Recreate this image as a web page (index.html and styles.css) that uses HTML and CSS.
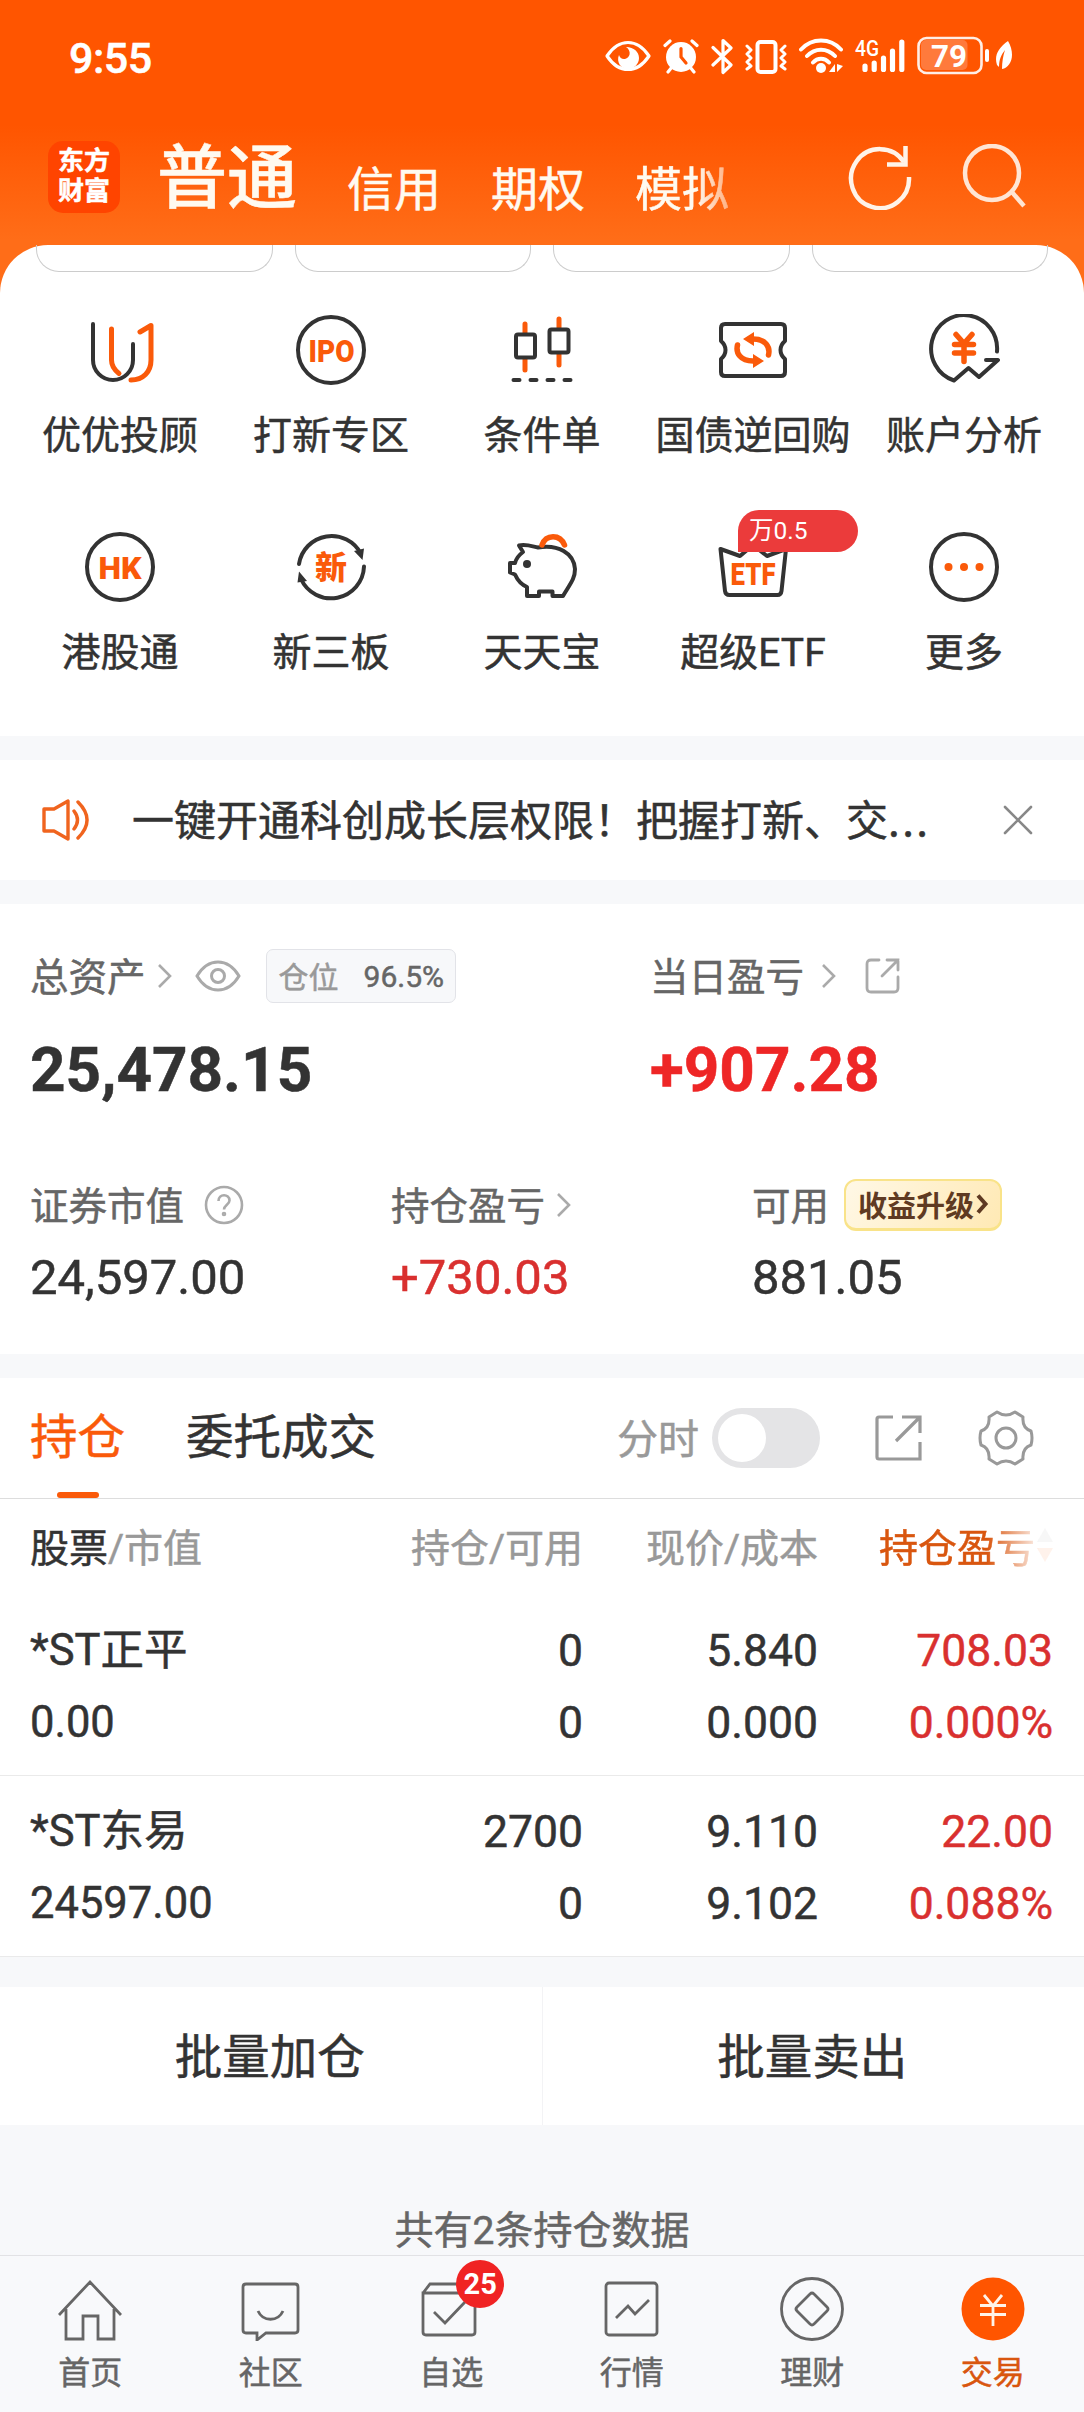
FILE: index.html
```
<!DOCTYPE html>
<html lang="zh-Hans">
<head>
  <meta charset="UTF-8" />
  <title>交易</title>
  <link rel="stylesheet" href="styles.css">
</head>
<body>

  <header class="header">
    <!-- 状态栏 -->
    <div class="status-bar">
      <span class="status-time">9:55</span>
      <div class="status-icons">
        <svg width="46" height="40" viewBox="0 0 46 40" fill="none" stroke="#fff" stroke-width="3.2">
          <path d="M2 20C8 11 15 6.500 23 6.500S38 11 44 20C38 29 31 33.500 23 33.500S8 29 2 20Z" stroke-linejoin="round" />
          <path d="M21 11c6 4 4 11-1 12-3 .5-5-1-6-4-3 7 2 14 9 14 6 0 11-5 11-11S29 11 21 11Z" fill="#fff" stroke="none" />
        </svg>
        <svg width="36" height="40" viewBox="0 0 36 40" fill="none" stroke="#fff" stroke-width="3.200" stroke-linecap="round">
          <circle cx="18" cy="21" r="15" fill="#fff" stroke="none" />
          <path d="M2 9.500 7 5M34 9.500 29 5M5 36l4-5M31 36l-4-5" />
          <path d="M18 12.500V21l5 6" stroke="#ff5500" />
        </svg>
        <svg width="22" height="40" viewBox="0 0 22 40" fill="none" stroke="#fff" stroke-width="3.200" stroke-linecap="round" stroke-linejoin="round">
          <path d="M2 11.500 20 29l-8 7.500V4.500L20 12 2 29" />
        </svg>
        <svg width="42" height="40" viewBox="0 0 42 40" fill="none" stroke="#fff" stroke-linejoin="round" stroke-linecap="round">
          <rect x="12.500" y="6" width="18" height="30" rx="3" stroke-width="4" />
          <path d="M2 10l4 4-4 4 4 4-4 4 4 4-4 3M40 10l-4 4 4 4-4 4 4 4-4 4 4 3" stroke-width="3" />
        </svg>
        <svg width="44" height="40" viewBox="0 0 44 40" fill="none" stroke="#fff" stroke-width="4" stroke-linecap="round">
          <path d="M2 13.500C13 1.500 31 1.500 42 13.500M8 20C16 11.500 28 11.500 36 20M14 26.500c4.500-5 11.500-5 16 0" />
          <circle cx="22" cy="32" r="5" fill="#fff" stroke="none" />
          <path d="M36 28v8h-6zM38 28v8l6-6z" fill="#fff" stroke="none" />
        </svg>
        <svg class="signal" width="50" height="40" viewBox="0 0 50 40" fill="none" stroke="#fff" stroke-width="5.200" stroke-linecap="round">
          <text x="0" y="20" class="svg-4g" textLength="24" lengthAdjust="spacingAndGlyphs">4G</text>
          <path d="M10 30v3.500M19.200 27v6.500M28.500 22v11.500M37.500 15v18.500M46.800 6v27.500" />
        </svg>
        <svg width="97" height="40" viewBox="0 0 97 40">
          <rect x="4" y="4" width="46.500" height="30" rx="5" fill="#ff7a3c" />
          <rect x="1.500" y="2" width="63" height="35" rx="8" fill="none" stroke="#fff" stroke-opacity=".9" stroke-width="2.600" />
          <path d="M70 15v9" stroke="#fff" stroke-width="4" stroke-linecap="round" />
          <text x="14" y="30.500" class="svg-battery" textLength="36" lengthAdjust="spacingAndGlyphs">79</text>
          <path d="M91 5C81 12 77 20 80 29l2 2c0-7 2-12 6-17-2 6-3 12-3 19 9-2 14-14 6-28Z" fill="#fff" />
        </svg>
      </div>
    </div>

    <!-- 账户切换 -->
    <div class="top-bar">
      <div class="app-logo">东方<br>财富</div>
      <nav class="account-tabs">
        <span class="account-tab active">普通</span>
        <span class="account-tab">信用</span>
        <span class="account-tab">期权</span>
        <span class="account-tab faded">模拟</span>
      </nav>
      <div class="top-actions">
        <svg width="66" height="66" viewBox="0 0 66 66" fill="none" stroke="#fff3e8" stroke-width="4.500">
          <path d="M62 33A29 29.500 0 1 1 57 18" />
          <path d="M40 20.500h18.500V2" />
        </svg>
        <svg width="66" height="66" viewBox="0 0 66 66" fill="none" stroke="#ffe5d4" stroke-width="4.500">
          <circle cx="31" cy="29" r="27" />
          <path d="M50 47 63 62" />
        </svg>
      </div>
    </div>
  </header>

  <main class="sheet">
    <div class="pill-row">
      <span class="pill"></span>
      <span class="pill"></span>
      <span class="pill"></span>
      <span class="pill"></span>
    </div>

    <!-- 功能入口 -->
    <div class="menu-grid">
      <div class="menu-item">
        <svg class="menu-icon" viewBox="0 0 72 72">
          <path class="dark" d="M9 10v36a20 20 0 0 0 40 0V30" />
          <path class="orange" d="M27.500 15v31c0 6 3 10 7.500 13.500M47 66c12 0 20-8 20-20V11.500L56 18" />
        </svg>
        <span>优优投顾</span>
      </div>
      <div class="menu-item">
        <svg class="menu-icon" viewBox="0 0 72 72">
          <circle class="dark" cx="36" cy="36" r="33" />
          <text x="13.500" y="47.500" textLength="46" lengthAdjust="spacingAndGlyphs">IPO</text>
        </svg>
        <span>打新专区</span>
      </div>
      <div class="menu-item">
        <svg class="menu-icon" viewBox="0 0 72 72">
          <path class="orange wick" d="M19 10v46M53 5v46" />
          <rect class="dark filled" x="10" y="20.500" width="19" height="23" rx="2" />
          <rect class="dark filled" x="43.500" y="15.500" width="19" height="23" rx="2" />
          <path class="dark" d="M7.500 66h6M24.500 66h6M41.500 66h6M58.500 66h6" />
        </svg>
        <span>条件单</span>
      </div>
      <div class="menu-item">
        <svg class="menu-icon" viewBox="0 0 72 72">
          <path class="dark" d="M8 10h56q4 0 4 4v13c-6 5-6 13 0 18v13q0 4-4 4H8q-4 0-4-4V45c6-5 6-13 0-18V14q0-4 4-4Z" />
          <path class="orange thick" d="M20.500 31c-2 8 3 16 15.500 16M51.500 41c2-8-3-16-15.500-16" />
          <path class="fill-orange" d="M26 25 37 18v14zM47 47 36 54V40z" />
        </svg>
        <span>国债逆回购</span>
      </div>
      <div class="menu-item">
        <svg class="menu-icon" viewBox="0 0 72 72">
          <path class="dark" d="M69 37.500A33 33.500 0 1 0 26 66.500L40.500 54 51 63 70 46H58" />
          <path class="orange thick" d="M28 20.500l8 9 8-9M36 30v17.500M26.500 30.500h19M26.500 39h19" />
        </svg>
        <span>账户分析</span>
      </div>

      <div class="menu-item">
        <svg class="menu-icon" viewBox="0 0 72 72">
          <circle class="dark" cx="36" cy="36" r="33" />
          <text x="14.500" y="47.500" textLength="43" lengthAdjust="spacingAndGlyphs">HK</text>
        </svg>
        <span>港股通</span>
      </div>
      <div class="menu-item">
        <svg class="menu-icon" viewBox="0 0 72 72">
          <path class="dark" d="M4 33A33 33 0 0 1 66 23M69 35.500A33 33 0 0 1 6 48" />
          <path class="fill-dark" d="M59 20 69 17.500 67.500 29zM4 40.500 12 50 2.500 51.500z" />
          <text x="20" y="47.500" class="icon-cjk">新</text>
        </svg>
        <span>新三板</span>
      </div>
      <div class="menu-item">
        <svg class="menu-icon" viewBox="0 0 72 72">
          <path class="dark" d="M17 21 13 14.500C20 13 25 15 32 16.500 52 13 68 22 69 38c0 10-5 15-12 27H46.500v-4.500H33V65H21V56C14 53 11 48 9 43.500L4 41.500V32h5c1-4 4-8 8-11Z" />
          <path class="orange thick" d="M36 14c4-11 18-11 22.500 0" />
          <circle class="fill-dark" cx="21" cy="33" r="4" />
        </svg>
        <span>天天宝</span>
      </div>
      <div class="menu-item">
        <div class="icon-wrap">
          <svg class="menu-icon" viewBox="0 0 72 72">
            <path class="dark" d="M3.500 18 23 25 36 14 50 25 69 18 64.500 60q-.5 4-4 4H12.500q-4 0-4.500-4Z" />
            <text x="13.500" y="54" textLength="45" lengthAdjust="spacingAndGlyphs">ETF</text>
          </svg>
          <span class="menu-badge">万0.5</span>
        </div>
        <span>超级ETF</span>
      </div>
      <div class="menu-item">
        <svg class="menu-icon" viewBox="0 0 72 72">
          <circle class="dark" cx="36" cy="36" r="33" />
          <g class="fill-orange">
            <circle cx="20.500" cy="36" r="4" />
            <circle cx="36" cy="36" r="4" />
            <circle cx="51.500" cy="36" r="4" />
          </g>
        </svg>
        <span>更多</span>
      </div>
    </div>
  </main>

  <!-- 公告 -->
  <section class="notice">
    <svg width="48" height="44" viewBox="0 0 48 44" fill="none" stroke="#f0641e" stroke-width="3.400" stroke-linejoin="round" stroke-linecap="round">
      <path d="M2 11h10L26 3v38L12 33H2Z" />
      <path d="M32 13q7 9 0 18M36 4q18 18 0 36" />
    </svg>
    <p class="notice-text">一键开通科创成长层权限！把握打新、交<span class="dots">...</span></p>
    <svg width="30" height="30" viewBox="0 0 30 30" stroke="#888" stroke-width="2.600" stroke-linecap="round">
      <path d="M2 2l26 26M28 2 2 28" />
    </svg>
  </section>

  <!-- 资产 -->
  <section class="assets">
    <div class="assets-main">
      <div class="asset">
        <div class="asset-label">
          <span class="label-text">总资产</span>
          <svg class="chevron" viewBox="0 0 16 26"><path d="M2 2l11 11L2 24" /></svg>
          <svg class="eye" viewBox="0 0 46 32" fill="none" stroke="#aaa" stroke-width="3">
            <path d="M2 16C8 6 15 2 23 2s15 4 21 14c-6 10-13 14-21 14S8 26 2 16Z" />
            <circle cx="23" cy="16" r="6.500" />
          </svg>
          <span class="position-badge"><i>仓位</i><b>96.5%</b></span>
        </div>
        <div class="asset-total">25,478.15</div>
      </div>
      <div class="asset">
        <div class="asset-label">
          <span class="label-text">当日盈亏</span>
          <svg class="chevron wide" viewBox="0 0 16 26"><path d="M2 2l11 11L2 24" /></svg>
          <svg class="share" viewBox="0 0 36 36" fill="none" stroke="#aaa" stroke-width="2.800" stroke-linecap="round">
            <path d="M14 2H6Q2 2 2 6v24q0 4 4 4h23q4 0 4-4V19M22 2h11v10M33 2 17 18" />
          </svg>
        </div>
        <div class="asset-total up">+907.28</div>
      </div>
    </div>
    <div class="assets-sub">
      <div class="asset">
        <div class="asset-label">
          <span class="label-text">证券市值</span>
          <svg class="help" viewBox="0 0 40 40" fill="none" stroke="#aaa" stroke-width="2.600">
            <circle cx="20" cy="20" r="18" />
            <path d="M14.500 16c0-7.500 11-7.500 11-.5 0 4-5.500 4.500-5.500 9" />
            <circle cx="20" cy="29" r="1" />
          </svg>
        </div>
        <div class="asset-value">24,597.00</div>
      </div>
      <div class="asset">
        <div class="asset-label">
          <span class="label-text">持仓盈亏</span>
          <svg class="chevron" viewBox="0 0 16 26"><path d="M2 2l11 11L2 24" /></svg>
        </div>
        <div class="asset-value up">+730.03</div>
      </div>
      <div class="asset">
        <div class="asset-label">
          <span class="label-text">可用</span>
          <span class="upgrade-btn">收益升级<svg width="13" height="20" viewBox="0 0 13 20" fill="none" stroke="#5f3a22" stroke-width="4"><path d="M2 1.500 9.500 10 2 18.500" /></svg></span>
        </div>
        <div class="asset-value">881.05</div>
      </div>
    </div>
  </section>

  <!-- 持仓列表 -->
  <section class="holdings">
    <div class="holding-tabs">
      <span class="holding-tab active">持仓</span>
      <span class="holding-tab">委托成交</span>
      <div class="holding-tools">
        <span class="label-text">分时</span>
        <span class="switch"></span>
        <svg class="tool-share" viewBox="0 0 48 48" fill="none" stroke="#999" stroke-width="3.200">
          <path d="M19 3H5Q3 3 3 5v38q0 2 2 2h41V28M28 3h18v16M46 3 22 27" />
        </svg>
        <svg class="tool-gear" viewBox="0 0 56 56" fill="none" stroke="#999" stroke-width="3" stroke-linejoin="round">
          <path d="M19 2q9 6 18 0l8 5q-1 11 8 14 2 7 0 14-9 3-8 14l-8 5q-9-6-18 0l-8-5q1-11-8-14-2-7 0-14 9-3 8-14Z" />
          <circle cx="28" cy="28" r="10" />
        </svg>
      </div>
    </div>

    <table class="holding-table">
      <thead>
        <tr>
          <th><em>股票</em>/市值</th>
          <th>持仓/可用</th>
          <th>现价/成本</th>
          <th><span class="sort-label">持仓盈亏<svg width="16" height="34" viewBox="0 0 16 34"><path d="M8 0l8 14H0z" fill="#999" /><path d="M8 34l8-14H0z" fill="#f50" /></svg></span></th>
        </tr>
      </thead>
      <tbody>
        <tr>
          <td>*ST正平<br>0.00</td>
          <td>0<br>0</td>
          <td>5.840<br>0.000</td>
          <td class="up">708.03<br>0.000%</td>
        </tr>
        <tr>
          <td>*ST东易<br>24597.00</td>
          <td>2700<br>0</td>
          <td>9.110<br>9.102</td>
          <td class="up">22.00<br>0.088%</td>
        </tr>
      </tbody>
    </table>
  </section>

  <div class="batch-actions">
    <button class="batch-btn">批量加仓</button>
    <button class="batch-btn">批量卖出</button>
  </div>

  <p class="holding-count">共有2条持仓数据</p>

  <!-- 底部导航 -->
  <nav class="tab-bar">
    <div class="tab-item">
      <svg class="tab-icon" viewBox="0 0 64 64">
        <path d="M1 38 32 5l31 33M8 32v30h17V39h15v23h16V32" />
      </svg>
      <span>首页</span>
    </div>
    <div class="tab-item">
      <svg class="tab-icon" viewBox="0 0 64 64">
        <path d="M7 7h49q3 0 3 3v43q0 3-3 3H27l-9 7v-7H7q-3 0-3-3V10q0-3 3-3Z" />
        <path d="M19 34c5 11 20 11 25 0" />
      </svg>
      <span>社区</span>
    </div>
    <div class="tab-item">
      <div class="icon-wrap">
        <svg class="tab-icon" viewBox="0 0 64 64">
          <path d="M4 16v39q0 3 3 3h46q3 0 3-3V16ZM4 16l7-9h39l6 9" />
          <path d="M15 35l11 11 20-21" />
        </svg>
        <span class="tab-badge">25</span>
      </div>
      <span>自选</span>
    </div>
    <div class="tab-item">
      <svg class="tab-icon" viewBox="0 0 64 64">
        <rect x="6" y="6" width="51" height="52" rx="3" />
        <path d="M16 41 28 29l7 8 14-14" />
      </svg>
      <span>行情</span>
    </div>
    <div class="tab-item">
      <svg class="tab-icon" viewBox="0 0 64 64">
        <circle cx="32" cy="32" r="30.500" />
        <path d="M30 17q2-2 4 0l13 13q2 2 0 4L34 47q-2 2-4 0L17 34q-2-2 0-4Z" />
      </svg>
      <span>理财</span>
    </div>
    <div class="tab-item active">
      <svg class="tab-icon" viewBox="0 0 64 64">
        <circle cx="32" cy="32" r="31.500" fill="#ff5500" stroke="none" />
        <path d="M23 18l9 11 9-11M32 28v21M19 28.500h26M19 37.500h26" stroke="#fff3e8" />
      </svg>
      <span>交易</span>
    </div>
  </nav>

</body>
</html>
```
FILE: styles.css
```
/* ===== 基本设定 ===== */
* {
  box-sizing: border-box;
}

body {
  margin: 0;
  width: 1084px;
  height: 2412px;
  overflow: hidden;
  display: flex;
  flex-direction: column;
  font-family: Roboto, "Noto Sans CJK SC", sans-serif;
  -webkit-text-stroke: 0.5px;
  background: #f7f8fa;
  color: #333;
}

svg {
  display: block;
  flex-shrink: 0;
}

p {
  margin: 0;
}

.up {
  color: #d9302f;
}

/* ===== 头部 ===== */
.header {
  height: 300px;
  margin-bottom: -55px;
  background: linear-gradient(#ff5500 0, #ff5500 125px, #ff6d18 240px, #ff6d18 100%);
}

.status-bar {
  height: 112px;
  padding: 0 70px 0 69px;
  display: flex;
  align-items: center;
  justify-content: space-between;
  color: #fff;
}

.status-time {
  font-size: 43px;
  font-weight: 500;
  line-height: 1;
  letter-spacing: -0.5px;
  padding-top: 4px;
}

.status-icons {
  display: flex;
  align-items: center;
  gap: 12px;
}

.signal {
  overflow: visible;
}

.svg-4g {
  font: 500 22px Roboto, sans-serif;
  fill: #fff;
  stroke: none;
}

.svg-battery {
  font: 700 32px Roboto, sans-serif;
  fill: #fff;
}

.top-bar {
  height: 129px;
  padding: 0 57px 0 48px;
  display: flex;
  align-items: center;
}

.app-logo {
  width: 72px;
  height: 72px;
  margin-right: 37px;
  border-radius: 15px;
  background: #ff4400;
  color: #fff;
  font-size: 26px;
  font-weight: 700;
  line-height: 30px;
  padding-top: 5px;
  text-align: center;
}

.account-tabs {
  display: flex;
  align-items: baseline;
  padding-top: 12px;
  color: #fffaf0;
}

.account-tab {
  font-size: 47px;
  line-height: 70px;
  margin-right: 50px;
  padding-top: 1px;
}

.account-tab + .account-tab {
  position: relative;
  top: 3px;
}

.account-tab.active {
  font-size: 70px;
  font-weight: 500;
}

.account-tab.faded {
  -webkit-mask-image: linear-gradient(90deg, #000 65%, rgba(0, 0, 0, 0.5) 100%);
  mask-image: linear-gradient(90deg, #000 65%, rgba(0, 0, 0, 0.5) 100%);
}

.top-actions {
  margin-left: auto;
  display: flex;
  gap: 48px;
}

/* ===== 功能入口 ===== */
.sheet {
  height: 491px;
  background: #fff;
  border-radius: 48px 48px 0 0;
}

.pill-row {
  display: flex;
  gap: 22px;
  padding: 0 36px;
}

.pill {
  flex: 1;
  height: 27px;
  border: 1px solid #ccc;
  border-top: none;
  border-radius: 0 0 23px 23px;
}

.menu-grid {
  display: grid;
  grid-template-columns: repeat(5, 211px);
  grid-auto-rows: 217px;
  justify-content: center;
  padding-top: 42px;
}

.menu-item {
  display: flex;
  flex-direction: column;
  align-items: center;
  font-size: 39px;
  line-height: 50px;
  white-space: nowrap;
}

.menu-item > span {
  margin-top: 25px;
}

.icon-wrap {
  position: relative;
}

.menu-icon {
  width: 72px;
  height: 72px;
  fill: none;
  stroke-linecap: round;
  stroke-linejoin: round;
}

.menu-icon .dark {
  stroke: #333;
  stroke-width: 4;
}

.menu-icon .filled {
  fill: #fff;
}

.menu-icon .orange {
  stroke: #fa5a0a;
  stroke-width: 5;
}

.menu-icon .thick {
  stroke-width: 5.5;
}

.menu-icon .fill-orange {
  fill: #fa5a0a;
}

.menu-icon .fill-dark {
  fill: #333;
}

.menu-icon text {
  font: 900 32px Roboto, sans-serif;
  fill: #fa5a0a;
}

.menu-icon .icon-cjk {
  font: 900 32px "Noto Sans CJK SC", sans-serif;
}

.menu-badge {
  position: absolute;
  left: 21px;
  top: -21px;
  width: 120px;
  height: 42px;
  padding-left: 11px;
  border-radius: 21px 21px 21px 0;
  background: #eb3b3b;
  color: #fff;
  font-size: 24.500px;
  line-height: 42px;
  -webkit-text-stroke: 0;
}

/* ===== 公告 ===== */
.notice {
  height: 120px;
  margin: 24px 0;
  padding: 0 51px 0 42px;
  display: flex;
  align-items: center;
  background: #fff;
}

.notice-text {
  flex: 1;
  margin-left: 42px;
  padding-bottom: 5px;
  font-family: "Noto Sans CJK SC", sans-serif;
  font-size: 42px;
  white-space: nowrap;
}

.dots {
  letter-spacing: 2.500px;
}

/* ===== 资产 ===== */
.assets {
  height: 450px;
  padding: 44px 30px 0;
  background: #fff;
}

.assets-main {
  display: grid;
  grid-template-columns: 620px 1fr;
  height: 229px;
}

.assets-sub {
  display: grid;
  grid-template-columns: 361px 361px 1fr;
}

.asset-label {
  display: flex;
  align-items: center;
  height: 56px;
  font-size: 38.500px;
  color: #666;
}

.label-text {
  padding-bottom: 5px;
}

.chevron {
  width: 16px;
  height: 26px;
  margin-left: 11px;
  fill: none;
  stroke: #aaa;
  stroke-width: 2.600px;
}

.chevron.wide {
  margin-left: 17px;
}

.eye {
  width: 46px;
  height: 32px;
  margin-left: 22px;
}

.share {
  width: 36px;
  height: 36px;
  margin-left: 28px;
}

.help {
  width: 40px;
  height: 40px;
  margin-left: 20px;
}

.position-badge {
  display: flex;
  align-items: center;
  gap: 25px;
  width: 190px;
  height: 54px;
  margin-left: 25px;
  padding-left: 12px;
  border: 1px solid #e2e3e8;
  border-radius: 7px;
  background: #f7f8fa;
  font-size: 30px;
}

.position-badge i {
  padding-bottom: 3px;
  font-style: normal;
  color: #999;
}

.position-badge b {
  font-weight: 400;
}

.asset-total {
  margin-top: 29px;
  font-size: 62px;
  font-weight: 700;
  line-height: 74px;
}

.asset-total.up {
  color: #ee2626;
}

.asset-value {
  margin-top: 15px;
  font-size: 49px;
  line-height: 60px;
}

.upgrade-btn {
  display: flex;
  align-items: center;
  gap: 2px;
  width: 158px;
  height: 52px;
  margin-left: 15px;
  padding: 0 0 2px 12px;
  border: 2px solid #f9e389;
  border-bottom-width: 3px;
  border-radius: 12px;
  background: linear-gradient(120deg, #fff8e6, #ffe9b4);
  color: #5f3a22;
  font-size: 29px;
  font-weight: 700;
  -webkit-text-stroke: 0;
}

/* ===== 持仓 ===== */
.holdings {
  margin-top: 24px;
  background: #fff;
}

.holding-tabs {
  display: flex;
  align-items: center;
  height: 121px;
  padding: 0 50px 0 30px;
  border-bottom: 1px solid #ddd;
}

.holding-tab {
  position: relative;
  margin-right: 61px;
  font-size: 47.500px;
  line-height: 120px;
}

.holding-tab.active {
  color: #fa5a0a;
}

.holding-tab.active::after {
  content: "";
  position: absolute;
  left: 27px;
  bottom: 0;
  width: 42px;
  height: 6px;
  border-radius: 3px;
  background: #fa5a0a;
}

.holding-tools {
  margin-left: auto;
  display: flex;
  align-items: center;
  font-size: 41px;
  color: #999;
}

.switch {
  width: 108px;
  height: 60px;
  margin-left: 13px;
  padding: 6px;
  border-radius: 30px;
  background: #e4e4e6;
}

.switch::before {
  content: "";
  display: block;
  width: 48px;
  height: 48px;
  border-radius: 50%;
  background: #fff;
}

.tool-share {
  width: 48px;
  height: 48px;
  margin-left: 54px;
}

.tool-gear {
  width: 56px;
  height: 56px;
  margin-left: 56px;
}

.holding-table {
  width: 1084px;
  table-layout: fixed;
  border-collapse: separate;
  border-spacing: 0;
}

.holding-table th {
  height: 96px;
  padding: 0 0 5px;
  font-size: 39px;
  font-weight: 400;
  color: #999;
  text-align: right;
}

.holding-table th em {
  font-style: normal;
  color: #333;
}

.holding-table td {
  padding: 20px 0 16px;
  border-bottom: 1px solid #eaeaea;
  font-size: 44.500px;
  line-height: 72px;
  text-align: right;
}

.holding-table th:first-child,
.holding-table td:first-child {
  width: 290px;
  padding-left: 30px;
  text-align: left;
}

.holding-table td:first-child {
  font-size: 43.500px;
}

.holding-table th:nth-child(2) {
  width: 293px;
}

.holding-table th:nth-child(3) {
  width: 235px;
}

.holding-table th:last-child,
.holding-table td:last-child {
  padding-right: 31px;
}

.sort-label {
  display: inline-flex;
  align-items: center;
  gap: 2px;
  color: #d9560f;
  -webkit-mask-image: linear-gradient(90deg, #000 62%, rgba(0, 0, 0, 0.08) 92%);
  mask-image: linear-gradient(90deg, #000 62%, rgba(0, 0, 0, 0.08) 92%);
}

/* ===== 批量操作 ===== */
.batch-actions {
  display: flex;
  height: 138px;
  margin-top: 30px;
  background: #fff;
}

.batch-btn {
  flex: 1;
  padding: 0 2px 6px 0;
  border: none;
  background: none;
  font-family: inherit;
  font-size: 47.500px;
  color: #333;
  -webkit-text-stroke: 0.5px;
}

.batch-btn + .batch-btn {
  border-left: 1px solid #f3f3f5;
}

.holding-count {
  height: 130px;
  padding-top: 76px;
  font-size: 39px;
  line-height: 60px;
  text-align: center;
  color: #666;
}

/* ===== 底部导航 ===== */
.tab-bar {
  display: flex;
  flex: 1;
  padding: 21px 1px 0 0;
  border-top: 1px solid #e2e2e5;
  background: #f8f9fb;
}

.tab-item {
  flex: 1;
  display: flex;
  flex-direction: column;
  align-items: center;
  font-size: 32px;
  line-height: 40px;
  color: #666;
}

.tab-item > span {
  margin-top: 12px;
}

.tab-item.active {
  color: #d9560f;
}

.tab-icon {
  width: 64px;
  height: 64px;
  fill: none;
  stroke: #666;
  stroke-width: 2.800px;
}

.tab-badge {
  position: absolute;
  left: 37px;
  top: -17px;
  width: 48px;
  height: 48px;
  border-radius: 50%;
  background: #f02323;
  color: #fff;
  font-size: 29px;
  font-weight: 700;
  line-height: 48px;
  text-align: center;
  -webkit-text-stroke: 0;
}
```
